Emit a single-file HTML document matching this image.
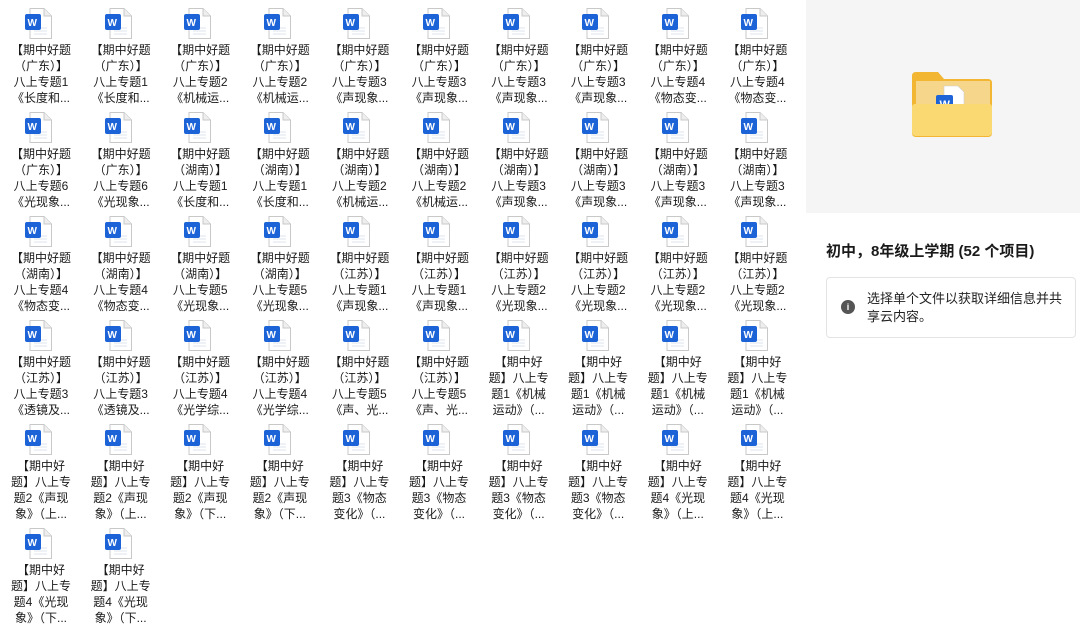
<!DOCTYPE html>
<html><head><meta charset="utf-8"><style>
body{margin:0;width:1080px;height:632px;background:#fff;font-family:"Liberation Sans","Noto Sans CJK SC",sans-serif;overflow:hidden;position:relative}
.c{position:absolute;width:80px;text-align:center;font-size:12px;line-height:16px;color:#1a1a1a}
.c svg{display:block;margin:8px auto 3px 24px}
.r{position:absolute;left:806px;top:0;width:274px;height:213px;background:#f5f5f5}
.t{position:absolute;left:826px;top:240px;font-size:15px;font-weight:bold;color:#1a1a1a}
.b{position:absolute;left:826px;top:277px;width:248px;height:59px;border:1px solid #e3e3e3;border-radius:4px;background:#fff}
.b .i{position:absolute;left:14px;top:22px;width:14px;height:14px;border-radius:50%;background:#555;color:#fff;font-size:9px;line-height:14px;text-align:center;font-weight:bold}
.b .x{position:absolute;left:40px;top:12px;font-size:13px;line-height:18px;color:#222;width:200px}
</style></head><body>
<div id="g"></div>
<div class="r"><svg style="position:absolute;left:104px;top:70px" width="84" height="68" viewBox="0 0 84 68"><path d="M2 6q0-4 4-4h22l6 7h44q4 0 4 4v50q0 4-4 4H6q-4 0-4-4z" fill="#f2b632"/><rect x="6" y="11" width="74" height="40" fill="#f6d68a"/><path d="M34 16h14l6 6v22H34z" fill="#fff" stroke="#ccc" stroke-width=".6"/><rect x="26" y="25" width="17" height="17" rx="2" fill="#1e64d6"/><text x="29.5" y="38" font-size="11" fill="#fff" font-family="Liberation Sans" font-weight="bold">W</text><path d="M2 37q0-3 3-3h74q3 0 3 3v25q0 4-4 4H6q-4 0-4-4z" fill="#fad872"/></svg></div>
<div class="t">初中，8年级上学期 (52 个项目)</div>
<div class="b"><div class="i">i</div><div class="x">选择单个文件以获取详细信息并共享云内容。</div></div>
<script>
var L=[];function a(n,arr){for(var i=0;i<n;i++)L.push(arr)}
function f(p,z,t){return ["【期中好题","（"+p+"）】","八上专题"+z,"《"+t+"..."]}
a(2,f("广东",1,"长度和"));a(2,f("广东",2,"机械运"));a(4,f("广东",3,"声现象"));a(2,f("广东",4,"物态变"));
a(2,f("广东",6,"光现象"));a(2,f("湖南",1,"长度和"));a(2,f("湖南",2,"机械运"));a(4,f("湖南",3,"声现象"));
a(2,f("湖南",4,"物态变"));a(2,f("湖南",5,"光现象"));a(2,f("江苏",1,"声现象"));a(4,f("江苏",2,"光现象"));
a(2,f("江苏",3,"透镜及"));a(2,f("江苏",4,"光学综"));a(2,f("江苏",5,"声、光"));
a(4,["【期中好","题】八上专","题1《机械","运动》（..."]);
a(2,["【期中好","题】八上专","题2《声现","象》（上..."]);a(2,["【期中好","题】八上专","题2《声现","象》（下..."]);
a(4,["【期中好","题】八上专","题3《物态","变化》（..."]);a(2,["【期中好","题】八上专","题4《光现","象》（上..."]);
a(2,["【期中好","题】八上专","题4《光现","象》（下..."]);
var ic='<svg width="28" height="31" viewBox="0 0 28 31"><path d="M5 .5h14l7.5 7.5v22.5H5z" fill="#fff" stroke="#c8c8c8"/><path d="M19 .5v7.5h7.5" fill="#eee" stroke="#c8c8c8"/><path d="M9 20h13M9 23h13M9 26h13" stroke="#dde3ee"/><rect x="0" y="6" width="16" height="16" rx="2" fill="#1d63d8"/><text x="2.5" y="18" font-size="10" font-weight="bold" fill="#fff" font-family="Liberation Sans">W</text></svg>';
var s="";L.forEach(function(t,i){var c=i%10,r=Math.floor(i/10);s+='<div class="c" style="left:'+(1+c*79.6)+'px;top:'+(r*104)+'px">'+ic+t.join("<br>")+'</div>'});
document.getElementById("g").innerHTML=s;
</script>
</body></html>
